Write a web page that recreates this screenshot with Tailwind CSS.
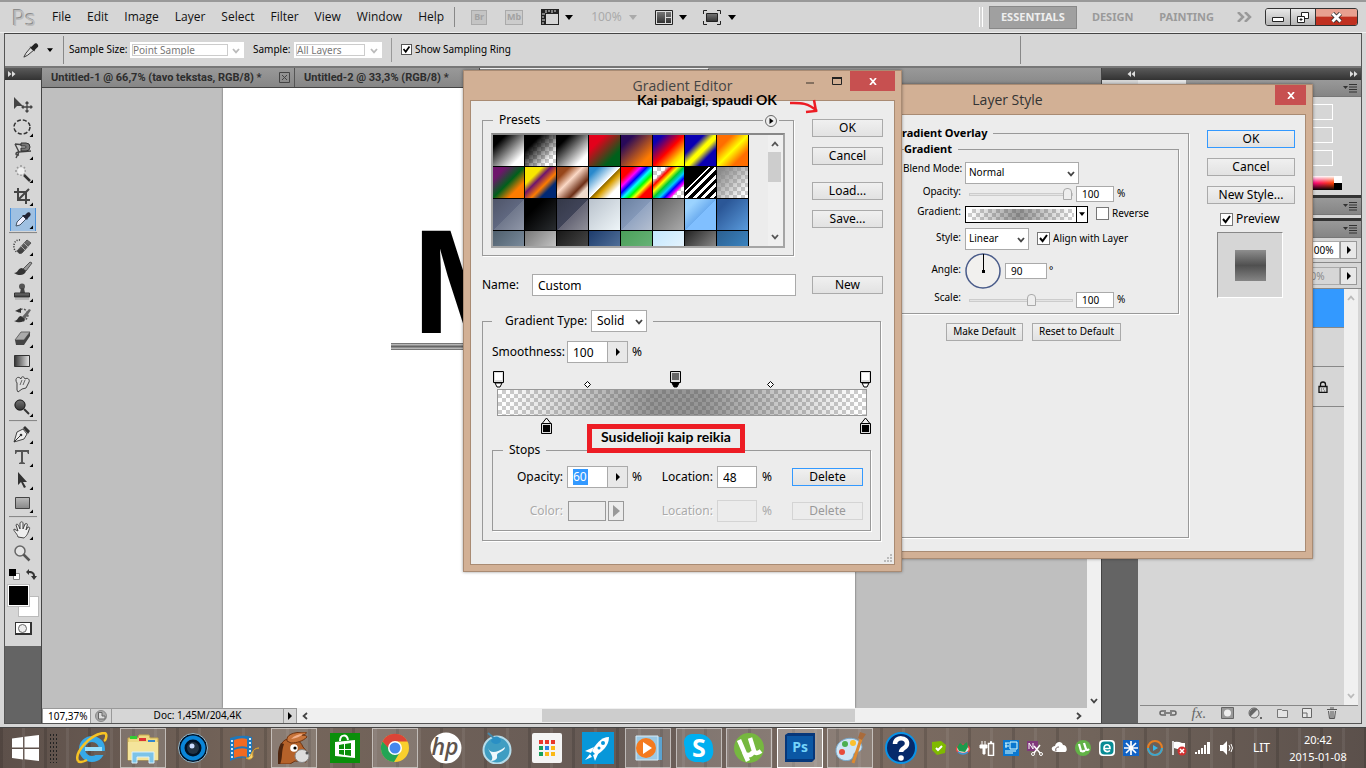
<!DOCTYPE html>
<html lang="en">
<head>
<meta charset="utf-8">
<title>Gradient Editor</title>
<script src="https://cdn.jsdelivr.net/npm/@tailwindcss/browser@4"></script>
</head>
<body class="h-screen overflow-hidden font-['Noto_Sans',sans-serif] text-xs text-black">
<svg class="absolute size-0">
  <defs>
    <symbol id="chev" viewBox="0 0 8 6"><path d="M1 1l3 3.4L7 1" fill="none" stroke="currentColor" stroke-width="1.8"/></symbol>
    <symbol id="tri" viewBox="0 0 6 8"><path d="M1 0v8l4-4z" fill="currentColor"/></symbol>
    <symbol id="down" viewBox="0 0 8 5"><path d="M0 0h8L4 5z" fill="currentColor"/></symbol>
    <symbol id="check" viewBox="0 0 13 13"><path d="M3 6l2.6 3.2L10 3" fill="none" stroke="#000" stroke-width="2"/></symbol>
    <symbol id="pmenu" viewBox="0 0 14 9"><path d="M0 2h5L2.500 5z" fill="#333"/><path d="M6 .5h8M6 3h8M6 5.500h8M6 8h8" stroke="#333"/></symbol>
    <symbol id="dbl" viewBox="0 0 8 6"><path d="M0 0l3.500 3L0 6zM4 0l3.500 3L4 6z" fill="#ddd"/></symbol>
    <linearGradient id="gdark" x1="0" x2="0" y1="0" y2="1"><stop stop-color="#777"/><stop offset="1" stop-color="#333"/></linearGradient>
    <linearGradient id="gh"><stop stop-color="#333"/><stop offset="1" stop-color="#e8e8e8"/></linearGradient>
    <linearGradient id="glight" x1="0" x2="0" y1="0" y2="1"><stop stop-color="#bbb"/><stop offset="1" stop-color="#888"/></linearGradient>
  </defs>
</svg>

<div class="flex h-full flex-col">
  <!-- application window -->
  <div class="flex min-h-0 flex-1 flex-col border-t-2 border-[#999] bg-[#d6d6d6]">
    <header class="flex h-[31px] shrink-0 items-center border-b border-white/60 pr-2">
      <div class="w-10 pl-3 font-['Open_Sans',sans-serif] text-[22px] leading-7 text-[#bcbcbc] [text-shadow:-1px_-1px_0_#8c8c8c]">Ps</div>
      <nav class="ml-3 flex gap-4 font-['Open_Sans',sans-serif] text-xs text-[#111]">
        <a href="#">File</a><a href="#">Edit</a><a href="#">Image</a><a href="#">Layer</a><a href="#">Select</a><a href="#">Filter</a><a href="#">View</a><a href="#">Window</a><a href="#">Help</a>
      </nav>
      <div class="ml-2.5 h-5 w-px bg-[#888]"></div>
      <div class="ml-4 flex items-center">
        <button class="h-[15px] w-4 border border-[#aaa] bg-[#c4c4c4] text-[9px] leading-3 font-bold text-[#a2a2a2]" aria-label="Bridge">Br</button>
        <button class="ml-[18px] h-[15px] w-[18px] border border-[#aaa] bg-[#ccc] text-[9px] leading-3 font-bold text-[#a2a2a2]" aria-label="Mini Bridge">Mb</button>
        <button class="ml-[18px] flex items-center gap-1.5" aria-label="View extras">
          <svg class="h-4 w-[18px]" viewBox="0 0 18 16"><path d="M0 0h18v16H0z" fill="#222"/><path d="M5 5h12v10H5z" fill="#d6d6d6"/><path d="M5 1v3M8 1v2M11 1v3M14 1v2M1 5h3M1 8h2M1 11h3M1 14h2" stroke="#ddd"/></svg>
          <svg class="h-[5px] w-2"><use href="#down"/></svg>
        </button>
        <button class="ml-[18px] flex items-center gap-[7px] text-[#aaa]">100%<svg class="h-[5px] w-2"><use href="#down"/></svg></button>
        <button class="ml-[18px] flex items-center gap-1.5" aria-label="Arrange documents">
          <svg class="h-[15px] w-[18px]" viewBox="0 0 18 15"><path d="M.5.5h17v14H.5z" fill="#ddd" stroke="#222"/><path d="M2 2h8v11H2zM11 2h5v5h-5zM11 8h5v5h-5z" fill="url(#gdark)"/></svg>
          <svg class="h-[5px] w-2"><use href="#down"/></svg>
        </button>
        <button class="ml-4 flex items-center gap-[7px]" aria-label="Screen mode">
          <svg class="h-[15px] w-[18px]" viewBox="0 0 18 15"><path d="M.5 4V.5H4M14 .5h3.500V4M17.500 11v3.500H14M4 14.500H.5V11" fill="none" stroke="#222"/><path d="M3.500 3.500h11v8h-11z" fill="url(#gdark)" stroke="#222"/></svg>
          <svg class="h-[5px] w-2"><use href="#down"/></svg>
        </button>
      </div>
      <div class="ml-auto flex items-center font-bold text-[#9a9a9a]">
        <div class="mr-[6px] h-5 w-1 border-x border-white"></div>
        <button class="h-[23px] w-[88px] border border-[#888] bg-[#a0a0a0] text-[11px] text-[#eee]">ESSENTIALS</button>
        <button class="ml-[15px] text-[11px]">DESIGN</button>
        <button class="ml-[26px] text-[11px]">PAINTING</button>
        <svg class="ml-[23px] h-[10px] w-[15px]" viewBox="0 0 15 10"><path d="M1 0l5 5-5 5M8 0l5 5-5 5" fill="none" stroke="#999" stroke-width="2.500"/></svg>
        <div class="ml-[13px] flex h-[18px] w-[93px] overflow-hidden rounded-[3px] border border-[#333]">
          <button class="grid w-6 place-items-center bg-linear-to-b from-[#e8e8e8] to-[#b5b5b5]" aria-label="Minimize"><svg class="mt-1 h-[5px] w-3" viewBox="0 0 12 5"><path d="M.5.5h11v4H.5z" fill="#fff" stroke="#222"/></svg></button>
          <button class="grid w-[26px] place-items-center border-x border-[#333] bg-linear-to-b from-[#e8e8e8] to-[#b5b5b5]" aria-label="Restore"><svg class="h-[11px] w-3" viewBox="0 0 12 11"><path d="M4.500.5h7v6h-7z" fill="#fff" stroke="#222"/><path d="M.5 4.500h7v6h-7z" fill="#fff" stroke="#222"/><path d="M3 7h2v1H3z" stroke="#222"/></svg></button>
          <button class="grid flex-1 place-items-center bg-linear-to-b from-[#e8a090] from-45% to-[#c03020] to-50%" aria-label="Close"><svg class="h-[11px] w-[13px]" viewBox="0 0 13 11"><path d="M2.500 1.500l8 8M10.500 1.500l-8 8" stroke="#333" stroke-width="4.500"/><path d="M2.500 1.500l8 8M10.500 1.500l-8 8" stroke="#fff" stroke-width="2.800"/></svg></button>
        </div>
      </div>
    </header>

    <div class="mr-1 ml-1 flex min-h-0 flex-1 flex-col border border-[#555] border-t-[#444]">
      <section class="flex h-[34px] shrink-0 items-center border-b-2 border-b-[#777] text-[10px]">
        <div class="ml-1 h-6 w-1 bg-[radial-gradient(#888_40%,transparent_50%)] bg-[length:2px_2px]"></div>
        <button class="ml-[9px] flex items-center gap-2" aria-label="Eyedropper tool">
          <svg class="size-[17px]" viewBox="0 0 18 18"><path d="M2 16l2-4 5-6 3 3-6 5z" fill="#ddd" stroke="#333"/><path d="M8 5l5 5 1-2 3-3c1-2-2-5-4-3l-3 3z" fill="#222"/></svg>
          <svg class="h-1 w-[6px]"><use href="#down"/></svg>
        </button>
        <div class="ml-2.5 h-7 w-px bg-[#888]"></div>
        <label for="ss" class="ml-[5px] w-[61px] whitespace-nowrap">Sample Size:</label>
        <div class="relative h-4 w-[114px] bg-white p-0.5"><select id="ss" class="block h-3 w-24 appearance-none border border-[#ccc] text-[10px] leading-[10px] text-[#777]"><option>Point Sample</option></select><svg class="pointer-events-none absolute top-1.5 right-1 h-1.5 w-2 text-[#bbb]"><use href="#chev"/></svg></div>
        <label for="sm" class="ml-[9px] w-[41px]">Sample:</label>
        <div class="relative h-4 w-[88px] bg-white p-0.5"><select id="sm" class="block h-3 w-[69px] appearance-none border border-[#ccc] text-[10px] leading-[10px] text-[#777]"><option>All Layers</option></select><svg class="pointer-events-none absolute top-1.5 right-1 h-1.5 w-2 text-[#bbb]"><use href="#chev"/></svg></div>
        <div class="ml-[9px] h-6 w-px bg-[#999]"></div>
        <label class="ml-[9px] flex items-center gap-[3px]"><span class="grid"><input type="checkbox" checked class="col-start-1 row-start-1 size-[11px] appearance-none border border-[#555] bg-white"><svg class="pointer-events-none col-start-1 row-start-1 size-[11px]"><use href="#check"/></svg></span>Show Sampling Ring</label>
        <div class="mr-[340px] ml-auto h-7 w-px bg-[#888]"></div>
      </section>

      <div class="flex min-h-0 flex-1">
        <!-- tools -->
        <aside class="flex w-[37px] shrink-0 flex-col border-r border-[#444] bg-[#646464]">
          <div class="flex h-3 items-center bg-linear-to-b from-[#5a5a5a] to-[#333] pl-[3px]"><svg class="h-1.5 w-2"><use href="#dbl"/></svg></div>
          <div class="flex h-[566px] flex-col items-center bg-[#d6d6d6]">
            <div class="mt-1 mb-[5px] h-1 w-7 shrink-0 bg-[radial-gradient(#888_40%,transparent_50%)] bg-[length:2px_2px]"></div>
            <div id="tools" class="flex flex-col items-center"></div>
            <div class="mt-0.5 flex h-[14px] w-7 items-center justify-between">
              <svg class="size-[11px]" viewBox="0 0 11 11"><path d="M4.500 4.500h6v6h-6z" fill="#fff" stroke="#888"/><path d="M0 0h7v7H0z" fill="#000"/></svg>
              <svg class="size-[11px]" viewBox="0 0 11 11"><path d="M0 3l3-3v2c4 0 6 2 6 5h2l-3 4-3-4h2c0-2-1-3-4-3v2z" fill="#333"/></svg>
            </div>
            <div class="relative mt-1 h-8 w-[31px]">
              <button class="absolute right-0 bottom-0 size-[21px] border border-[#bbb] bg-white" aria-label="Background color"></button>
              <button class="absolute top-0 left-0 size-[21px] border border-white bg-black outline outline-[#bbb]" aria-label="Foreground color"></button>
            </div>
            <button class="mt-[5px] grid h-[13px] w-[17px] place-items-center border border-r-2 border-b-2 border-[#333] bg-white" aria-label="Quick mask"><svg class="size-[9px]" viewBox="0 0 9 9"><circle cx="4.500" cy="4.500" r="4" fill="#eee" stroke="#666"/></svg></button>
          </div>
        </aside>

        <!-- document -->
        <main class="flex min-w-0 flex-1 flex-col bg-[#bfbfbf]">
          <div class="flex h-5 shrink-0 border-b border-[#444] bg-linear-to-b from-[#999] to-[#868686] font-['Roboto',sans-serif] text-[11px] leading-[18px] font-bold text-[#2d2d2d]">
            <button class="flex w-[253px] items-center justify-between border-r border-[#555] px-1 pl-[9px] whitespace-nowrap">Untitled-1 @ 66,7% (tavo tekstas, RGB/8) *<svg class="size-[11px]" viewBox="0 0 11 11"><path d="M.5.500h10v10H.5zM3 3l5 5M8 3l-5 5" fill="none" stroke="#444"/></svg></button>
            <button class="w-[185px] border-r border-[#555] pl-[9px] text-left whitespace-nowrap">Untitled-2 @ 33,3% (RGB/8) *</button>
            <button class="w-[229px] border-t border-r border-white border-r-[#555]" aria-label="Active document"></button>
          </div>
          <div class="flex min-h-0 flex-1">
            <div class="flex min-w-0 flex-1 justify-start overflow-hidden pl-[181px]">
              <div class="h-full w-[632px] shrink-0 bg-white shadow-[0_0_2px_#555]">
                <div class="w-[241px] overflow-hidden pt-[133px] pl-[189px] font-['Liberation_Sans_Narrow','Liberation_Sans',sans-serif] text-[148px] leading-[122px] font-bold">M</div>
                <div class="ml-[168px] h-[7px] w-[200px] border-y border-[#777] bg-linear-to-b from-[#ccc] via-[#666] to-[#ccc]"></div>
              </div>
            </div>
            <div class="flex w-[14px] flex-col items-center justify-end bg-[#f0f0f0] pb-1"><svg class="h-1.5 w-2 text-[#444]"><use href="#chev"/></svg></div>
          </div>
          <footer class="flex h-[15px] shrink-0 items-center bg-[#f0f0f0] text-[10px]">
            <input aria-label="Zoom" value="107,37%" class="h-full w-[48px] border-t border-l border-[#999] bg-white pl-[5px] text-[10px]">
            <button class="grid h-full w-[22px] place-items-center border-x border-t border-[#999] bg-[#d6d6d6]" aria-label="Preview"><svg class="size-3" viewBox="0 0 12 12"><circle cx="6" cy="6" r="5.500" fill="#aaa" stroke="#888"/><path d="M3.500 2.500H7V6h3v3H3.500z" fill="#ddd" stroke="#666"/></svg></button>
            <div class="h-full w-[171px] border-t border-[#999] bg-[#d6d6d6] text-center leading-[13px]">Doc: 1,45M/204,4K</div>
            <button class="grid h-full w-[14px] place-items-center border-x border-t border-[#999] bg-[#d6d6d6]" aria-label="Status menu"><svg class="h-2 w-1.5"><use href="#tri"/></svg></button>
            <svg class="ml-1 h-2 w-2 rotate-90 text-[#444]"><use href="#chev"/></svg>
            <div class="ml-[233px] h-[13px] w-[313px] bg-[#cdcdcd]"></div>
            <svg class="mr-[18px] ml-auto h-2 w-2 -rotate-90 text-[#444]"><use href="#chev"/></svg>
          </footer>
        </main>

        <!-- docked panels -->
        <aside class="flex w-[260px] shrink-0 flex-col border-l border-[#444]">
          <div class="flex h-3 shrink-0 items-center justify-between bg-linear-to-b from-[#5a5a5a] to-[#333] pr-[3px] pl-[25px]"><svg class="h-1.5 w-2 rotate-180"><use href="#dbl"/></svg><svg class="h-1.5 w-2"><use href="#dbl"/></svg></div>
          <div class="flex min-h-0 flex-1">
            <div class="w-9 shrink-0 border-t-[5px] border-[#d6d6d6] bg-[#646464]"></div>
            <div class="flex min-w-0 flex-1 flex-col bg-[#d6d6d6]">
              <div class="flex h-[17px] shrink-0 items-center justify-end border-b border-[#777] bg-linear-to-b from-[#999] to-[#858585] pr-1"><div class="mr-auto h-full w-12 bg-[#e6e6e6]"></div><svg class="h-[9px] w-3.5"><use href="#pmenu"/></svg></div>
              <div class="flex h-[98px] shrink-0 flex-col items-end gap-[7px] pt-[7px] pr-[28px]">
                <div class="h-4 w-10 border border-white"></div><div class="h-4 w-10 border border-white"></div><div class="h-4 w-10 border border-white"></div>
                <div class="-mr-[9px] mt-[3px] flex h-[14px] w-[120px]"><div class="flex-1 bg-[linear-gradient(#fff,transparent_50%,#000),linear-gradient(90deg,#00f,#f08_80%,#f40)]"></div><div class="w-2 bg-linear-to-b from-white from-50% to-black to-50%"></div></div>
              </div>
              <div class="flex h-[20px] shrink-0 items-center justify-end border-t-[3px] border-b border-[#333] border-b-[#777] bg-linear-to-b from-[#999] to-[#858585] pr-1"><svg class="h-[9px] w-3.5"><use href="#pmenu"/></svg></div>
              <div class="mt-[3px] flex h-[20px] shrink-0 items-center justify-end border-t-[3px] border-b border-[#333] border-b-[#777] bg-linear-to-b from-[#999] to-[#858585] pr-1"><svg class="h-[9px] w-3.5"><use href="#pmenu"/></svg></div>
              <div class="flex h-[25px] shrink-0 items-center justify-end border-b border-[#888] pr-1 text-[10px]"><input aria-label="Layer opacity" value="100%" class="h-[18px] w-[33px] border border-[#aaa] bg-white text-[10px]"><button class="grid h-[18px] w-[17px] place-items-center border border-[#999] bg-[#e8e8e8]" aria-label="Opacity slider"><svg class="h-2 w-1.5"><use href="#tri"/></svg></button></div>
              <div class="flex h-[26px] shrink-0 items-center justify-end border-b border-[#888] pr-1 text-[10px]"><input aria-label="Layer fill" value="100%" class="h-[18px] w-[42px] border border-[#aaa] bg-[#d6d6d6] text-[10px] text-[#888]"><button class="grid h-[18px] w-[17px] place-items-center border border-[#999] bg-[#e8e8e8]" aria-label="Fill slider"><svg class="h-2 w-1.5"><use href="#tri"/></svg></button></div>
              <div class="mr-[3px] flex min-h-0 flex-1">
                <div class="flex-1"><div class="h-[39px] border-b border-[#888] bg-[#3399ff]"></div><div class="h-[39px] border-b border-[#888]"></div><div class="flex h-10 items-center justify-end border-b border-[#888] pr-4"><svg class="h-3 w-[10px]" viewBox="0 0 10 12"><path d="M2.500 5V3.500a2.500 2.500 0 015 0V5M1 5.500h8v6H1z" fill="none" stroke="#111" stroke-width="1.300"/><path d="M3 8h1M5 8h1M3 10h1M6 10h1" stroke="#555"/></svg></div></div>
                <div class="flex w-[14px] flex-col items-center justify-between bg-[#f0f0f0] py-1.5 text-[#bbb]"><svg class="h-1.5 w-2 rotate-180"><use href="#chev"/></svg><svg class="h-1.5 w-2"><use href="#chev"/></svg></div>
              </div>
              <div class="ml-0.5 mr-[3px] flex h-[18px] shrink-0 items-center justify-between border-t border-[#888] pr-[21px] pb-[3px] pl-[19px]">
                <svg class="h-2 w-[18px]" viewBox="0 0 18 8"><path d="M7 2H3a2 2 0 000 4h4M11 2h4a2 2 0 010 4h-4M5 4h8" fill="none" stroke="#666" stroke-width="1.500"/></svg>
                <span class="font-['Liberation_Serif',serif] text-[15px] leading-4 text-[#666] italic">fx.</span>
                <svg class="h-3 w-[13px]" viewBox="0 0 13 12"><path d="M.5.500h12v11H.5z" fill="#999" stroke="#666"/><circle cx="6.500" cy="6" r="3.500" fill="#eee"/></svg>
                <svg class="h-3 w-[14px]" viewBox="0 0 14 12"><circle cx="6" cy="6" r="5" fill="#ddd" stroke="#666"/><path d="M2.500 9.500A5 5 0 019.500 2.500z" fill="#666"/><path d="M12 10h2v2h-2z" fill="#666"/></svg>
                <svg class="h-[10px] w-[11px]" viewBox="0 0 11 10"><path d="M.5 1.500h4l1 1h5v7H.5z" fill="#e4e4e4" stroke="#777"/></svg>
                <svg class="size-[10px]" viewBox="0 0 10 10"><path d="M.5.500h9v9H.5z" fill="#e8e8e8" stroke="#666"/><path d="M0 5h5v5" fill="none" stroke="#666"/></svg>
                <svg class="h-3 w-[10px]" viewBox="0 0 10 12"><path d="M0 2.500h10M3 1h4M1.500 4l1 7.500h5l1-7.500M4 4v7M6 4v7" fill="none" stroke="#555"/></svg>
              </div>
            </div>
          </div>
        </aside>
      </div>
    </div>
    <div class="h-[3px] shrink-0"></div>
  </div>

  <!-- taskbar -->
  <footer class="flex h-[41px] shrink-0 items-center border-t border-[#444] bg-[repeating-linear-gradient(90deg,#0002_0_3px,transparent_3px_22px,#fff1_22px_25px,transparent_25px_44px),linear-gradient(90deg,#5d504a,#76665b_20%,#665a55_45%,#7b6b61_65%,#71645b_80%,#5b504b)]">
    <button class="w-[49px] pl-3" aria-label="Start"><svg class="h-[26px] w-[27px]" viewBox="0 0 27 26"><path d="M0 3.500L11 2v10.500H0zM12.500 1.800L27 0v12.500H12.500zM0 14h11v10.500L0 23zM12.500 14H27v12l-14.500-1.800z" fill="#fff"/></svg></button>
    <div class="h-[30px] w-[9px] bg-[radial-gradient(#222_35%,transparent_45%)] bg-[length:3px_4px]"></div>
    <div id="apps" class="ml-[11px] flex h-full flex-1 items-center justify-between"></div>
    <div class="flex w-[442px] shrink-0 items-center">
      <div id="tray" class="ml-[7px] flex w-[304px] items-center justify-between"></div>
      <span class="ml-[18px] w-5 text-xs text-white">LIT</span>
      <div class="ml-3 w-[66px] text-center text-[11px] leading-[17px] text-white">20:42<br>2015-01-08</div>
    </div>
  </footer>
</div>

<!-- Layer Style window -->
<section class="absolute top-[84px] left-[702px] flex h-[475px] w-[611px] flex-col border border-[#a98b73] bg-[#d2b095] px-1.5 pb-1.5 shadow-[0_0_3px_#0006]">
  <header class="relative flex h-[29px] shrink-0 items-center justify-center font-['Open_Sans',sans-serif] text-sm text-[#333]">Layer Style
    <button class="absolute top-0 right-0 grid h-5 w-[31px] place-items-center bg-[#c75050]" aria-label="Close"><svg class="h-[7px] w-2" viewBox="0 0 8 7"><path d="M1 0l6 7M7 0L1 7" stroke="#fff" stroke-width="1.700"/></svg></button>
  </header>
  <div class="flex flex-1 justify-end gap-[18px] border border-[#a98b73] bg-[#ececec] pr-[10px] text-[10px]">
    <fieldset class="mt-[10px] mb-[13px] w-[298px] border border-[#999] pr-[9px] pl-px shadow-[1px_1px_0_white]">
      <legend class="ml-px pr-1.5 text-[11px] leading-4 font-bold">Gradient Overlay</legend>
      <fieldset class="h-[173px] border border-[#999] pl-[9px] shadow-[1px_1px_0_white]">
        <legend class="ml-px pr-1.5 text-[11px] leading-4 font-bold">Gradient</legend>
        <div class="grid grid-cols-[58px_1fr] gap-x-[4px] [&>label]:text-right [&>label]:whitespace-nowrap">
          <label for="bm" class="mt-[5px]">Blend Mode:</label>
          <div class="relative mt-[5px] h-[23px] w-[114px]"><select id="bm" class="h-[22px] w-full appearance-none border border-[#aaa] bg-white pl-[3px] text-[10px]"><option>Normal</option></select><svg class="pointer-events-none absolute top-[9px] right-1 h-1.5 w-2 text-[#444]"><use href="#chev"/></svg></div>
          <label for="op">Opacity:</label>
          <div class="flex h-[18px] items-center pl-1"><input id="op" type="range" value="100" class="h-[3px] w-[104px] appearance-none border border-[#ccc] bg-[#e4e4e4] [&::-webkit-slider-thumb]:h-3 [&::-webkit-slider-thumb]:w-[9px] [&::-webkit-slider-thumb]:appearance-none [&::-webkit-slider-thumb]:rounded-t-[4px] [&::-webkit-slider-thumb]:border [&::-webkit-slider-thumb]:border-[#aaa] [&::-webkit-slider-thumb]:bg-[#eee]"><input aria-label="Opacity value" value="100" class="ml-[3px] mr-[3px] h-4 w-[38px] border border-[#aaa] bg-white pl-[5px] text-[10px]">%</div>
          <label for="gr" class="mt-0.5">Gradient:</label>
          <div class="flex h-[22px] items-center"><button id="gr" class="flex h-[17px] w-[123px] border border-black bg-white"><span class="m-0.5 h-[11px] flex-1 bg-[linear-gradient(90deg,#50505000_2%,#50505099_48%,#50505000_98%),repeating-conic-gradient(#ccc_0_25%,#fff_0_50%)] bg-[length:100%_100%,8px_8px]"></span><span class="grid h-full w-[11px] place-items-center border-l border-black"><svg class="h-1 w-[6px]"><use href="#down"/></svg></span></button>
            <label class="ml-2 flex items-center gap-[3px]"><input type="checkbox" class="size-[13px] appearance-none border border-[#777] bg-white">Reverse</label></div>
          <label for="st" class="mt-1.5">Style:</label>
          <div class="flex h-[28px] items-center"><div class="relative h-[22px] w-[64px]"><select id="st" class="h-full w-full appearance-none border border-[#aaa] bg-white pl-[3px] text-[10px]"><option>Linear</option></select><svg class="pointer-events-none absolute top-[9px] right-1 h-1.5 w-2 text-[#444]"><use href="#chev"/></svg></div>
            <label class="ml-2 flex items-center gap-[3px]"><span class="grid"><input type="checkbox" checked class="col-start-1 row-start-1 size-[13px] appearance-none border border-[#777] bg-white"><svg class="pointer-events-none col-start-1 row-start-1 size-[13px]"><use href="#check"/></svg></span>Align with Layer</label></div>
          <label for="an" class="mt-2.5">Angle:</label>
          <div class="flex h-[36px] items-center"><svg class="size-9" viewBox="0 0 36 36"><circle cx="18" cy="18" r="17" fill="#f1f0ee" stroke="#4a5c8a" stroke-width="1.500"/><path d="M18.500 1v17" stroke="#000"/><path d="M17 17h3v3h-3z"/></svg><input id="an" value="90" class="mr-0.5 ml-1 h-4 w-[42px] border border-[#aaa] bg-white pl-[5px] text-[10px]">°</div>
          <label for="sc" class="mt-[2px]">Scale:</label>
          <div class="flex h-[22px] items-center pl-1"><input id="sc" type="range" value="61" class="h-[3px] w-[104px] appearance-none border border-[#ccc] bg-[#e4e4e4] [&::-webkit-slider-thumb]:h-3 [&::-webkit-slider-thumb]:w-[9px] [&::-webkit-slider-thumb]:appearance-none [&::-webkit-slider-thumb]:rounded-t-[4px] [&::-webkit-slider-thumb]:border [&::-webkit-slider-thumb]:border-[#aaa] [&::-webkit-slider-thumb]:bg-[#eee]"><input aria-label="Scale value" value="100" class="ml-[3px] mr-[3px] h-4 w-[38px] border border-[#aaa] bg-white pl-[5px] text-[10px]">%</div>
        </div>
      </fieldset>
      <div class="mt-[9px] flex gap-[9px] pl-[53px]"><button class="h-[18px] w-[77px] border border-[#aaa] bg-linear-to-b from-[#f0f0f0] to-[#e2e2e2] whitespace-nowrap">Make Default</button><button class="h-[18px] w-[89px] border border-[#aaa] bg-linear-to-b from-[#f0f0f0] to-[#e2e2e2] whitespace-nowrap">Reset to Default</button></div>
    </fieldset>
    <div class="flex w-[88px] flex-col pt-[15px] text-xs">
      <button class="h-[18px] border border-[#3399ff] bg-linear-to-b from-[#f0f0f0] to-[#e2e2e2] leading-4">OK</button>
      <button class="mt-2.5 h-[18px] border border-[#aaa] bg-linear-to-b from-[#f0f0f0] to-[#e2e2e2] leading-4">Cancel</button>
      <button class="mt-2.5 h-[18px] border border-[#aaa] bg-linear-to-b from-[#f0f0f0] to-[#e2e2e2] leading-4">New Style...</button>
      <label class="mt-1.5 flex items-center gap-[3px] pl-[13px] leading-[18px]"><span class="grid"><input type="checkbox" checked class="col-start-1 row-start-1 size-[13px] appearance-none border border-[#777] bg-white"><svg class="pointer-events-none col-start-1 row-start-1 size-[13px]"><use href="#check"/></svg></span>Preview</label>
      <div class="mt-[4px] ml-[10px] grid size-[66px] place-items-center border border-t-[#888] border-r-white border-b-white border-l-[#888] bg-[#d6d6d6]"><div class="size-[31px] bg-linear-to-b from-[#8e8e8e] via-[#505050] to-[#858585]"></div></div>
    </div>
  </div>
</section>

<!-- Gradient Editor window -->
<section class="absolute top-[70px] left-[463px] flex h-[502px] w-[439px] flex-col border border-[#a98b73] bg-[#d2b095] px-1.5 pb-1.5 shadow-[0_0_3px_#0006]">
  <header class="relative flex h-[29px] shrink-0 items-center justify-center font-['Open_Sans',sans-serif] text-sm text-[#444]">Gradient Editor
    <div class="absolute top-0 right-0 flex">
      <button class="grid h-5 w-7 place-items-center" aria-label="Minimize"><svg class="mt-1 h-0.5 w-2"><path d="M0 0h8v2H0z" fill="#84705f"/></svg></button>
      <button class="grid h-5 w-[26px] place-items-center" aria-label="Maximize"><svg class="h-2 w-[10px]" viewBox="0 0 10 8"><path d="M.5 1h9v6.500h-9z" fill="none" stroke="#222"/><path d="M0 1h10" stroke="#222" stroke-width="2"/></svg></button>
      <button class="grid h-5 w-[45px] place-items-center bg-[#c75050]" aria-label="Close"><svg class="h-[7px] w-2" viewBox="0 0 8 7"><path d="M1 0l6 7M7 0L1 7" stroke="#fff" stroke-width="1.700"/></svg></button>
    </div>
  </header>
  <div class="relative flex-1 border border-[#a98b73] bg-[#ececec] pt-[11px] pr-[11px] pl-[11px]">
    <div class="flex justify-between">
      <fieldset class="relative w-[312px] border border-[#999] pb-[7px] pl-[8px] shadow-[1px_1px_0_white]">
        <legend class="ml-[2px] px-[6px] leading-4">Presets</legend>
        <button class="absolute -top-[13px] right-[14px] grid h-3 w-4 place-items-center bg-[#ececec]" aria-label="Presets menu"><svg class="size-3" viewBox="0 0 12 12"><circle cx="6" cy="6" r="5.500" fill="#eee" stroke="#666"/><path d="M4.500 3v6L8.500 6z"/></svg></button>
        <div class="mt-[5px] flex h-[115px] w-[294px] justify-between border-2 border-[#a5a5a5] border-t-[#888] bg-[#ececec]">
          <div id="presets" class="grid h-[111px] grid-cols-[repeat(8,31px)] content-start gap-px overflow-hidden border-r border-black bg-black"></div>
          <div class="flex w-[15px] flex-col items-center bg-[#f0f0f0] pt-1.5 pr-0.5 text-[#555]"><svg class="h-1.5 w-2 rotate-180"><use href="#chev"/></svg><div class="mt-[5px] h-[30px] w-[13px] bg-[#cdcdcd]"></div><svg class="mt-auto mb-1.5 h-1.5 w-2"><use href="#chev"/></svg></div>
        </div>
      </fieldset>
      <div class="flex w-[71px] flex-col pt-[7px]">
        <button class="h-[18px] border border-[#aaa] bg-linear-to-b from-[#f0f0f0] to-[#e2e2e2] leading-4">OK</button>
        <button class="mt-2.5 h-[18px] border border-[#aaa] bg-linear-to-b from-[#f0f0f0] to-[#e2e2e2] leading-4">Cancel</button>
        <button class="mt-[17px] h-[18px] border border-[#aaa] bg-linear-to-b from-[#f0f0f0] to-[#e2e2e2] leading-4">Load...</button>
        <button class="mt-2.5 h-[18px] border border-[#aaa] bg-linear-to-b from-[#f0f0f0] to-[#e2e2e2] leading-4">Save...</button>
      </div>
    </div>
    <div class="mt-[18px] flex items-center">
      <label for="nm" class="w-[50px]">Name:</label>
      <input id="nm" value="Custom" class="h-[22px] w-[264px] border border-[#aaa] bg-white pl-[5px]">
      <button class="ml-auto h-[18px] w-[71px] border border-[#aaa] bg-linear-to-b from-[#f0f0f0] to-[#e2e2e2] leading-4">New</button>
    </div>
    <fieldset class="mt-[14px] mr-0.5 border border-[#999] px-[9px] pb-[9px] shadow-[1px_1px_0_white]">
      <legend class="flex items-center pr-[6px] pl-[13px]"><label for="gt" class="w-[86px] whitespace-nowrap">Gradient Type:</label>
        <span class="relative"><select id="gt" class="block h-[22px] w-14 appearance-none border border-[#aaa] bg-white pl-[5px]"><option>Solid</option></select><svg class="pointer-events-none absolute top-[9px] right-1 h-1.5 w-2 text-[#444]"><use href="#chev"/></svg></span></legend>
      <div class="mt-[9px] flex items-center"><label for="sn" class="w-[75px] pr-1 text-right whitespace-nowrap">Smoothness:</label><input id="sn" value="100" class="h-[22px] w-[41px] border border-[#aaa] bg-white pl-[5px]"><button class="mr-1 grid h-[22px] w-5 place-items-center border border-l-0 border-[#aaa] bg-[#e8e8e8]" aria-label="Smoothness slider"><svg class="h-2 w-1.5"><use href="#tri"/></svg></button>%</div>
      <!-- gradient track with its stops -->
      <div class="relative mr-[4px] ml-[5px] mt-[26px] h-[27px] border border-[#999] bg-[linear-gradient(90deg,#50505000_2%,#50505099_42%,#50505099_56%,#50505000_98%),repeating-conic-gradient(#ccc_0_25%,#fff_0_50%)] bg-[length:100%_100%,8px_8px]">
        <div id="stops"></div>
      </div>
      <fieldset class="mt-[26px] border border-[#999] pb-[8px] shadow-[1px_1px_0_white]">
        <legend class="ml-[10px] px-1.5 leading-4">Stops</legend>
        <div class="mt-2 grid grid-cols-[74px_61px_30px_59px_45px_1fr] items-center gap-y-3">
          <label for="so" class="pr-1 text-right">Opacity:</label>
          <div class="flex"><div class="flex h-[22px] w-[41px] items-center border border-[#aaa] bg-white pl-[5px]"><input id="so" value="60" class="w-[15px] bg-[#3399ff] text-white"></div><button class="grid h-[22px] w-5 place-items-center border border-l-0 border-[#aaa] bg-[#e8e8e8]" aria-label="Opacity slider"><svg class="h-2 w-1.5"><use href="#tri"/></svg></button></div>
          <span class="pl-1">%</span><label for="sl" class="pr-1 text-right">Location:</label><input id="sl" value="48" class="h-[22px] w-10 border border-[#aaa] bg-white pl-[5px]">
          <div class="flex items-center justify-between pr-[7px]"><span>%</span><button class="h-[18px] w-[71px] border border-[#3399ff] bg-linear-to-b from-[#f0f0f0] to-[#e2e2e2] leading-4">Delete</button></div>
          <label for="co" class="pr-1 text-right text-[#aaa] [text-shadow:1px_1px_0_white]">Color:</label>
          <div class="flex gap-0.5 pl-px"><button id="co" disabled class="h-5 w-[38px] border border-[#999]"></button><button disabled class="grid h-5 w-4 place-items-center border border-[#999]" aria-label="Color menu"><svg class="h-3 w-[7px]" viewBox="1 0 4 8" preserveAspectRatio="none"><path d="M1 0v8l4-4z" fill="#999"/></svg></button></div>
          <span class="pl-1 text-[#aaa]"></span><label for="cl" class="pr-1 text-right text-[#aaa] [text-shadow:1px_1px_0_white]">Location:</label><input id="cl" disabled class="h-[22px] w-10 border border-[#d4d4d4]">
          <div class="flex items-center justify-between pr-[7px] text-[#aaa]"><span>%</span><button disabled class="h-[18px] w-[71px] border border-[#d4d4d4] leading-4 text-[#999]">Delete</button></div>
        </div>
      </fieldset>
    </fieldset>
    <svg class="absolute right-0.5 bottom-0.5 size-2" viewBox="0 0 8 8"><path d="M6 0h2v2H6zM3 3h2v2H3zM6 3h2v2H6zM0 6h2v2H0zM3 6h2v2H3zM6 6h2v2H6z" fill="#bbb"/></svg>
  </div>
  <!-- notes drawn over the window -->
  <p class="absolute top-[21px] left-[173px] font-['Lato',sans-serif] text-sm leading-4 font-bold whitespace-nowrap text-black">Kai pabaigi, spaudi OK</p>
  <svg class="absolute top-[26px] left-[325px] h-[17px] w-[31px]" viewBox="0 0 31 17"><path d="M1 6c9 0 17-1 27 8M25 3l2 11-10 1" fill="none" stroke="#ed1c24" stroke-width="2.500"/></svg>
  <p class="absolute top-[353px] left-[123px] flex h-[29px] w-[158px] items-center justify-center border-[5px] border-[#ed1c24] bg-[#ececec] pb-1 font-['Lato',sans-serif] text-sm leading-4 font-bold whitespace-nowrap text-black">Susidelioji kaip reikia</p>
</section>

<script>
const ck = 'repeating-conic-gradient(#ccc 0 25%,#fff 0 50%) 0 0/8px 8px';
const g = s => `linear-gradient(135deg,${s})`;
const presets = [
 g('#000 20%,#fff 80%'), g('#000 25%,#0000 80%')+','+ck, g('#000 20%,#fff 80%'), g('#e3001b 25%,#00601b 75%'), g('#290a59 20%,#ff7c00 80%'), g('#0a00b2 15%,#f00 50%,#fc0 75%,#ff0 85%'), g('#0a00b2 30%,#ff0 48%,#ff0 55%,#0a00b2 72%'), g('#ff6e00 25%,#ff0 50%,#ff6e00 75%'),
 g('#6f156c 20%,#00601b 50%,#fd7c00 75%'), g('#f9e600 28%,#6f156c 42%,#fd7c00 60%,#002874 75%'), g('#97461a 20%,#fbd8c5 42%,#6c2e16 70%,#efdbcd 82%'), g('#2989cc 15%,#fff 50%,#906a00 52%,#d99f00 60%,#fff 80%'), g('red 20%,#f0f 32%,#00f 42%,#0ff 52%,#0f0 62%,#ff0 70%,red 80%'), g('#fff0 22%,red 30%,#ff0 40%,#0c3 50%,#0cf 60%,#00f 68%,#f0f 76%,#fff0 80%')+','+ck, 'linear-gradient(135deg,#000 38%,transparent 0),repeating-linear-gradient(135deg,#000 0 3px,#fff 3px 6px)', g('#888 10%,#8880 90%')+','+ck,
 g('#4e5468,#606880 50%,#70788c 51%,#9097a8'), g('#000 30%,#292c2f'), g('#343848,#404458 50%,#656575 51%,#909099'), g('#b9c2cc,#eef5f8'), g('#6a80a0,#8498b8 50%,#93a5c2 51%,#b4bfd0'), g('#606060,#aaa'), g('#9bd3ff 20%,#6eaef0 50%,#80bfff 51%'), g('#2b5797 20%,#5a9bdc'),
 g('#4e5e6c,#8899ab'), g('#777,#ddd'), g('#181818,#555'), g('#1e3c6c,#6080a8'), g('#4ba05a,#70b880'), g('#c4e8ff,#eef6fc'), g('#222,#aaa'), g('#2b5f90,#4090d0')];
document.getElementById('presets').innerHTML = presets.map((b,i)=>`<button class="size-[31px]" aria-label="Preset ${i+1}" style="background:${b}"></button>`).join('');

const top_ = (f,b)=>`<path d="M.5.500h10v11h-10z" fill="#ddd" stroke="#000"/><path d="M2 2h7v7H2z" fill="${f}"/><path d="M2 12l2 4h3l2-4z" fill="${b}" stroke="#000"/>`;
const bot = `<path d="M1.500 6l4-5 4 5" fill="#eee" stroke="#000"/><path d="M.5 6.500h10v10H.5z" fill="#ddd" stroke="#000"/><path d="M2 8h7v7H2z"/>`;
document.getElementById('stops').innerHTML =
 [[0,'#fff','#fff'],[177,'#666','#000'],[367,'#fff','#fff']].map(([x,f,b])=>`<button class="absolute -top-[19px] h-[17px] w-[11px]" aria-label="Opacity stop" style="left:${x-5}px"><svg viewBox="0 0 11 17">${top_(f,b)}</svg></button>`).join('')+
 [48,367].map(x=>`<button class="absolute top-[27px] h-[17px] w-[11px]" aria-label="Color stop" style="left:${x-5}px"><svg viewBox="0 0 11 17">${bot}</svg></button>`).join('')+
 [89,272].map(x=>`<button class="absolute -top-[9px] size-[7px]" aria-label="Midpoint" style="left:${x-3}px"><svg viewBox="0 0 7 7"><path d="M3.500.5l3 3-3 3-3-3z" fill="#fff" stroke="#000"/></svg></button>`).join('');

const T = [
 ['Move','<path d="M1 2v12l3-3h6z" fill="#444"/><path d="M14 7v10M9 12h10M12.500 8.500L14 7l1.500 1.500M12.500 15.500L14 17l1.500-1.500M10.500 10.500L9 12l1.500 1.500M17.500 10.500L19 12l-1.500 1.500" fill="none" stroke="#444" stroke-width="1.300"/>'],
 ['Marquee','<ellipse cx="9" cy="9" rx="8" ry="7" fill="none" stroke="#333" stroke-width="1.500" stroke-dasharray="4 2"/>',1],
 ['Lasso','<path d="M2 3l4 8 12-1M2 3l10 1M6 11l-3 6M6 11c-4 0-4 4 0 3" fill="none" stroke="#444" stroke-width="1.400"/><path d="M8 2h5a3.500 3.500 0 010 8H8V7h4a1 1 0 000-2H8z" fill="#777" stroke="#333"/>',1],
 ['Wand','<path d="M8 1v12M2 7h12M4 3l8 8M12 3l-8 8" stroke="#999" stroke-width="1.500" stroke-dasharray="2 1"/><circle cx="8" cy="7" r="3.500" fill="#eee"/><path d="M11 11l6 6" stroke="#333" stroke-width="2.500"/>',1],
 ['Crop','<path d="M5 1v12h12M1 5h12v12M5 13L16 2" fill="none" stroke="#444" stroke-width="2"/>',1],
 ['Eyedropper','<path d="M3 16l1-4 6-6 3 3-6 6z" fill="#eef" stroke="#456"/><path d="M9 5l5 5 1-2 2-2c2-2-1-5-3-3l-2 2z" fill="#223"/>',1,1],
 0,
 ['Healing brush','<path d="M7 3C0 2-1 13 4 15" fill="none" stroke="#333" stroke-dasharray="1 1.500" stroke-width="1.500"/><path d="M4 14L14 3l4 3L9 16q-3 2-5-2z" fill="url(#gdark)" stroke="#555"/><path d="M8 9l4 4M11 6l4 4" stroke="#aaa"/>',1],
 ['Brush','<path d="M10 9l7-7 2 1-6 8z" fill="#999" stroke="#555"/><path d="M1 13c4 0 4-5 8-5l4 3c-1 5-8 5-12 2z" fill="#333"/>',1],
 ['Stamp','<circle cx="9" cy="3.500" r="3" fill="#555"/><path d="M8 5h3l1 5H7z" fill="#444"/><path d="M1.500 10h15v4h-15z" fill="url(#gdark)" stroke="#333"/><path d="M2 16h14" stroke="#999"/>',1],
 ['History brush','<path d="M5 6C8 1 14 3 15 8c0 4-2 6-5 7" fill="none" stroke="#555" stroke-dasharray="2 1.500" stroke-width="1.500"/><path d="M2 5l6-3v5z" fill="#333"/><path d="M9 11l7-8 2 1-6 9z" fill="#666"/><path d="M1 15c4 0 4-5 7-5l4 3c-1 4-7 4-11 2z" fill="#333"/>',1],
 ['Eraser','<path d="M2 11L8 3h9l-6 8z" fill="#aaa" stroke="#666"/><path d="M2 11h9l6-8v4l-6 9H3z" fill="#444"/>',1],
 ['Gradient','<path d="M1.500 3.500h15v11h-15z" fill="url(#gh)" stroke="#333"/>',1],
 ['Smudge','<path d="M4 15V8C1 4 5 0 8 4c0-3 3-3 4 0 3-2 5 1 4 3l-3 6-4 1-4 3z" fill="#ddd" stroke="#444"/><path d="M7 10l2-5M10 10l2-5" stroke="#666"/>',1],
 ['Burn','<circle cx="7" cy="7" r="5.500" fill="url(#gdark)"/><circle cx="7" cy="7" r="5" fill="none" stroke="#222"/><path d="M11 11l5 5" stroke="#333" stroke-width="2"/>',1],
 0,
 ['Pen','<path d="M1 17l3-10 6-3 4 5-3 5z" fill="#eee" stroke="#444"/><path d="M10 3l2-2 5 5-2 3z" fill="#333"/><path d="M1 17l7-7" stroke="#333"/><circle cx="8" cy="10" r="1.300" fill="#333"/>',1],
 ['Type','<path d="M2 2h14v4h-1l-1-2h-4v10l2 1v1H6v-1l2-1V4H4L3 6H2z" fill="#555"/>',1],
 ['Path selection','<path d="M5 1v13l3-3 3 6 2-1-3-5h4z" fill="#333"/>',1],
 ['Rectangle','<path d="M2.500 3.500h14v11h-14z" fill="url(#glight)" stroke="#444"/>',1],
 0,
 ['Hand','<path d="M5 16C4 12 0 10 1 8l4 2-2-6c1-2 2-1 4 4V2c1-2 3-1 3 0v6l2-5c2-1 3 0 2 2l-1 4 2-3c2 0 2 1 1 3-2 6-3 6-5 8z" fill="#eee" stroke="#444"/>',1],
 ['Zoom','<circle cx="7" cy="7" r="5" fill="#e4e4e4" stroke="#666" stroke-width="1.500"/><path d="M10.500 10.500l6 6" stroke="#555" stroke-width="2.500"/>']];
document.getElementById('tools').innerHTML = T.map(t => t ? `<button aria-label="${t[0]}" class="${t[3]?'grid h-[23px] w-[26px] place-items-center border-x border-[#4a90d9] bg-[#9fc0e2]':'grid h-[23px] w-[26px] place-items-center'}"><svg class="h-[19px] w-5" viewBox="0 0 20 19">${t[1]}${t[2]?'<path d="M20 15.500V19h-3.500z"/>':''}</svg></button>` : '<div class="my-px h-0.5 w-7 border-b border-white/60 bg-[#888]"></div>').join('');

const A = [
 ['Internet Explorer',0,'<circle cx="16" cy="17" r="10" fill="none" stroke="#36a9e8" stroke-width="6"/><path d="M9 17h17" stroke="#9be0fb" stroke-width="4"/><path d="M18 19h12v4H18z" fill="#6a5e56"/><path d="M2 29C-2 21 14 2 28 1c4 0 2 7 0 8M2 29c2 2 7 0 9-1" fill="none" stroke="#f7c325" stroke-width="2.500"/>'],
 ['File Explorer',1,'<path d="M1 6h10l1-3h10l1 3h8v22H1z" fill="#edd882" stroke="#c8a94c"/><path d="M3 4h7v3H3z" fill="#3c3"/><path d="M12 6h7v3h-7z" fill="#d33"/><path d="M21 8h7v3h-7z" fill="#38c"/><path d="M1 10h30v18H1z" fill="#f4e49b"/><path d="M5 31V20h22v11h-5v-6H10v6z" fill="#7cc3e8" stroke="#d8f0fb"/>'],
 ['Camera',0,'<circle cx="16" cy="16" r="14.500" fill="#001226" stroke="#9bc"/><circle cx="16" cy="16" r="10.500" fill="none" stroke="#0a85d8" stroke-width="4"/><circle cx="16" cy="16" r="6" fill="#234"/><circle cx="15" cy="14" r="2.500" fill="#cdf"/>'],
 ['Movie Maker',0,'<path d="M2 6q11-4 22-1v22q-11-4-22 2z" fill="#1f78bb"/><path d="M6 8q7-3 13-1v8q-6-2-13 1zM6 18q7-3 13-1v8q-6-2-13 1z" fill="#f26a21"/><path d="M4 8v20M22 6v20" stroke="#cfe8f8" stroke-width="2" stroke-dasharray="2 2"/><path d="M31 16c-5 0-7 3-6 9q-3 4-7 1c7 0 3-9 13-10z" fill="#fad36a" stroke="#c93"/>'],
 ['eMule',1,'<path d="M2 32C0 22 1 12 7 8c7-3 15-1 18 7l5 6-2 9-11-1-5 3z" fill="#b5622a" stroke="#6d3210"/><path d="M9 9C8 3 14 0 28 0c1 2-2 3-4 3 3 0 5 1 5 2-4 4-10 6-16 6z" fill="#c8743a" stroke="#6d3210"/><path d="M13 7q5-5 12-5-4 4-12 5z" fill="#f2b08a"/><path d="M2 32c3-6 1-12 4-20l-3-1C-1 18 0 25 0 32z" fill="#4e250e"/><ellipse cx="24" cy="24" rx="7" ry="6.500" fill="#ddd" stroke="#888"/><circle cx="29" cy="21" r="1.500" fill="#555"/><circle cx="16" cy="16" r="3.800" fill="#fff"/><circle cx="17" cy="16" r="1.600"/>'],
 ['Store',0,'<path d="M1 1h30v30H1z" fill="#0a8f0a"/><path d="M6 10l20-2v18L6 24z" fill="#fff"/><path d="M11 9c0-7 7-7 8-1" fill="none" stroke="#fff" stroke-width="2"/><path d="M10 13l5-1v5h-5zM16 12l6-1v6h-6zM10 18h5v5l-5-1zM16 18h6v6l-6-1z" fill="#0a8f0a"/>'],
 ['Chrome',1,'<circle cx="16" cy="16" r="14" fill="#f9cf2e"/><path d="M3.500 9.500A14 14 0 0128.500 9.500H16L11 19z" fill="#dc4437"/><path d="M3.500 9.500A14 14 0 0015 30l6-10-9-1z" fill="#23a455"/><circle cx="16" cy="16" r="7" fill="#fff"/><circle cx="16" cy="16" r="5.500" fill="#4587ee"/>'],
 ['HP',0,'<circle cx="16" cy="16" r="15.500" fill="#fff"/><text x="15" y="23" text-anchor="middle" font-family="Open Sans" font-size="23" font-style="italic" font-weight="600" fill="#5e544e">hp</text>'],
 ['Globe',0,'<circle cx="16" cy="18" r="13.500" fill="#3f9dc2" stroke="#b6dcea" stroke-width="2"/><path d="M7 16c2 6 9 5 17-1 0 5-9 5-8 9s-4 5-6 5c4-4-2-9-3-13z" fill="#eef8fc"/><path d="M7 1l7 6" stroke="#48a" stroke-width="2"/><path d="M10 9c2-6 9-6 10 0-2 4-8 4-10 0z" fill="#2a8fc4"/>'],
 ['App launcher',0,'<rect x="1" y="1" width="30" height="30" rx="2" fill="#f4f4f4"/><path d="M8 8h4v4H8zM14 8h4v4h-4zM20 8h4v4h-4z" fill="#e8372c"/><path d="M8 14h4v4H8zM8 20h4v4H8z" fill="#16a05d"/><path d="M14 14h4v4h-4z" fill="#2a82e4"/><path d="M20 14h4v4h-4zM14 20h4v4h-4zM20 20h4v4h-4z" fill="#fbb917"/>'],
 ['Rocket',0,'<path d="M0 0h32v32H0z" fill="#0797d9"/><path d="M27 5c-8 0-14 8-17 14l4 4c6-3 13-9 13-18z" fill="#fff"/><circle cx="21" cy="11" r="2" fill="#0797d9"/><circle cx="17" cy="16" r="1.500" fill="#0797d9"/><path d="M12 15l-9 4 6 2zM17 20l-4 9-2-6zM8 22l-5 6 7-3z" fill="#fff"/>'],
 ['Media Player',1,'<path d="M8 5h22v23H8z" fill="#5ba3d0"/><path d="M4 4h22v24H4z" fill="#9cc9e4" stroke="#d7ecf7"/><circle cx="14" cy="16" r="10" fill="#f47a1f"/><path d="M11 10v12l9-6z" fill="#fff"/>'],
 ['Skype',1,'<path d="M9 2h8a14 14 0 0113 14c2 10-5 16-13 14C7 31 1 25 2 16-1 8 3 2 9 2z" fill="#00aff0"/><text x="16" y="25" text-anchor="middle" font-family="Open Sans" font-size="25" font-weight="bold" fill="#fff">S</text>'],
 ['uTorrent',1,'<circle cx="16" cy="16" r="15" fill="#76b83f"/><path d="M6 8l6 14q5 3 8-2M17 6l4 13q2 4 7 0M11 20l4 9" fill="none" stroke="#fff" stroke-width="4.500"/>'],
 ['Photoshop',2,'<path d="M1 3l3-2h27v26l-3 3H1z" fill="#06377a"/><path d="M3 4h26v23H3z" fill="#0b57a4"/><text x="16" y="20" text-anchor="middle" font-family="Open Sans" font-size="14" font-weight="bold" fill="#75d3fa">Ps</text>'],
 ['Paint',1,'<path d="M2 20C1 10 12 4 21 7c10 4 8 13 2 13-5 0-2 6-7 8-6 2-13-1-14-8z" fill="#cfe5f5" stroke="#78a9cc"/><circle cx="8" cy="20" r="3" fill="#e74c3c"/><circle cx="11" cy="12" r="3" fill="#4caf50"/><circle cx="19" cy="11" r="3" fill="#fbc02d"/><path d="M28 4l-9 27" stroke="#dc8a32" stroke-width="3"/><path d="M26 0l6 2-4 6-4-2z" fill="#a96b3b"/>'],
 ['Help',0,'<circle cx="16" cy="16" r="15" fill="#062a6a" stroke="#0993e8" stroke-width="2"/><path d="M10 12c0-8 13-7 12 0 0 4-6 4-6 8" fill="none" stroke="#fff" stroke-width="4.500"/><circle cx="16" cy="26" r="2.800" fill="#fff"/>']];
const C = ['grid h-full w-[46px] place-items-center','grid h-full w-[46px] place-items-center border border-white/50 bg-white/15','grid h-full w-[46px] place-items-center border border-white bg-white/30'];
document.getElementById('apps').innerHTML = A.map(a=>`<button aria-label="${a[0]}" class="${C[a[1]]}"><svg class="size-8" viewBox="0 0 32 32">${a[2]}</svg></button>`).join('');

const Y = [
 '<path d="M1 2l9-1 5 4-1 8-8 2-5-5z" fill="#7fba00"/><path d="M5 8l2 2 4-4" fill="none" stroke="#fff" stroke-width="2"/>',
 '<ellipse cx="8" cy="9" rx="6.500" ry="4.500" fill="#dfe8df" stroke="#e44" stroke-width="1.500"/><path d="M2 7l3-4 3 2 4-3 1 5-3 5-6-1z" fill="#1d9a4c"/><path d="M3 12q5 4 10 0" stroke="#39d" stroke-width="1.500" fill="none"/>',
 '<path d="M3 1v4M6 1v4M1 5h7v3H6v6H4V8H1z" fill="#fff" stroke="#fff"/><path d="M9.500 3.500h5v12h-5zM11 2h2" fill="none" stroke="#fff" stroke-width="1.500"/>',
 '<path d="M0 0h16v16H0z" fill="#0a78d0"/><path d="M2 3h4M2 6h4M3 3v5M7 2h7v7H7zM2 11h11M2 13h8" fill="none" stroke="#dff"/>',
 '<path d="M0 1h11v10H0z" fill="#80397b"/><path d="M2 9V3l4 6V3" fill="none" stroke="#fff"/><path d="M7 6l6 7M13 5l-6 8" stroke="#fff" stroke-width="1.500"/><circle cx="6" cy="14" r="1.500" fill="none" stroke="#fff"/><circle cx="14" cy="14" r="1.500" fill="none" stroke="#fff"/>',
 '<path d="M2 11c-3-3 0-5 2-5 1-5 7-5 8-1 4 0 5 6 2 7H6z" fill="#fff"/><path d="M5 11c-1-3 1-4 3-4" stroke="#655" fill="none"/>',
 '<circle cx="8" cy="8" r="8" fill="#62b246"/><path d="M4 4l2 7q3 1 4-1M9 3l2 6q1 2 3 0" fill="none" stroke="#fff" stroke-width="2.200"/>',
 '<rect width="16" height="16" rx="4" fill="#fff"/><rect x="1.500" y="1.500" width="13" height="13" rx="4" fill="#078b94"/><path d="M5 8.500h6c0-5-6-5-6 0 0 3 4 4 6 2" fill="none" stroke="#fff" stroke-width="1.700"/>',
 '<path d="M0 0h16v16H0z" fill="#1263c5"/><path d="M8 1v14M1 8h14M3 3l10 10M13 3L3 13" stroke="#fff" stroke-width="1.700"/>',
 '<circle cx="8" cy="8" r="7" fill="none" stroke="#e67e22" stroke-width="2"/><path d="M1 8a7 7 0 0014 0" fill="none" stroke="#3aa6d0" stroke-width="2"/><path d="M6 5v6l5-3z" fill="#39b5e8"/>',
 '<path d="M2 1v14" stroke="#fff" stroke-width="1.500"/><path d="M3 2q4-1 8 1h3v6q-6 1-11-1z" fill="#fff"/><circle cx="11" cy="11" r="4.500" fill="#d32f2f"/><path d="M9 9l4 4M13 9l-4 4" stroke="#fff" stroke-width="1.500"/>',
 '<path d="M0 12h2v2H0zM3 10h2v4H3zM6 8h2v6H6zM9 5h2v9H9zM12 2h3v12h-3z" fill="#fff"/>',
 '<path d="M1 5h3l4-4v14l-4-4H1z" fill="#fff"/><path d="M10 5q2 3 0 6M12 4q3 4 0 8" fill="none" stroke="#fff"/>'];
document.getElementById('tray').innerHTML = Y.map(s=>`<svg class="size-4" viewBox="0 0 16 16">${s}</svg>`).join('');
</script>
</body>
</html>
